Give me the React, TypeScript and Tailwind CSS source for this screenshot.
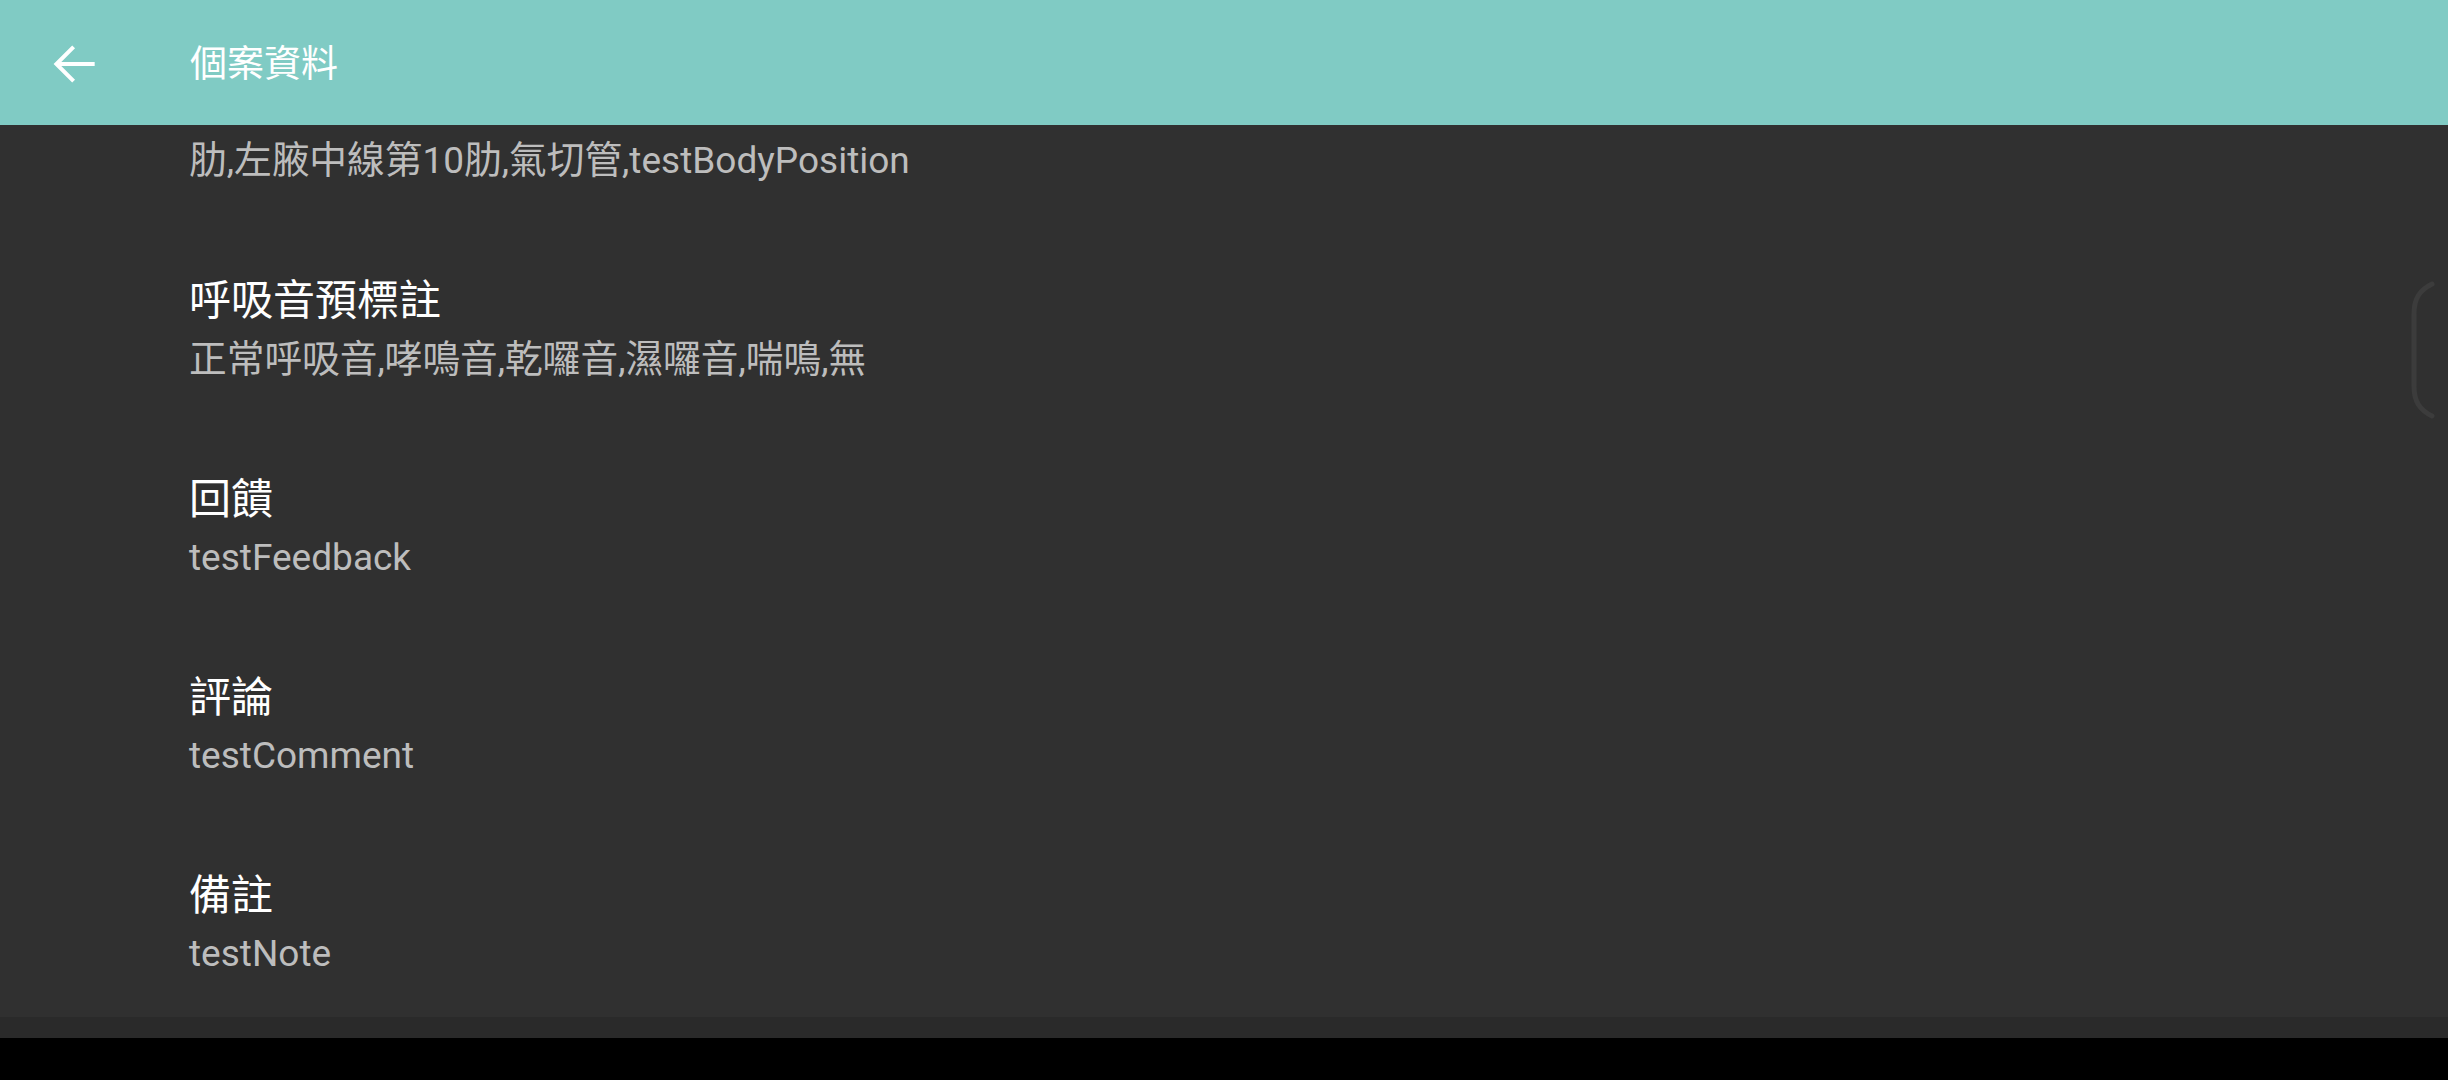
import React from "react";

const FONT = { fontFamily: 'Roboto, "Noto Sans CJK TC", "Noto Sans", sans-serif' };

function Mixed({ text }: { text: string }) {
  const parts = text.split(/([\u3400-\u9fff]+)/).filter((p) => p.length > 0);
  return (
    <>
      {parts.map((p, i) =>
        /[\u3400-\u9fff]/.test(p) ? (
          <span key={i} className="text-[37.7px]">
            {p}
          </span>
        ) : (
          <span key={i}>{p}</span>
        )
      )}
    </>
  );
}

function Item({ label, value }: { label: string; value: string }) {
  return (
    <div className="pt-[41px] pb-[41px] pl-[189px]">
      <div className="text-[42px] leading-[60px] text-white">{label}</div>
      <div className="text-[37px] leading-[56px] text-[#bdbdbd]">
        <Mixed text={value} />
      </div>
    </div>
  );
}

export default function App() {
  return (
    <div className="relative w-[2448px] h-[1080px] bg-black overflow-hidden" style={FONT}>
      <div className="h-[125px] bg-[#80cbc4] flex items-center">
        <div className="w-[62px] h-[62px] ml-[43px] mt-[3px] flex items-center justify-center">
          <svg width="62" height="62" viewBox="0 0 24 24" fill="#ffffff">
            <path d="M20 11.2H7.1l5.3-5.3L11.3 4.8 4.1 12l7.2 7.2 1.1-1.1-5.3-5.3H20z" />
          </svg>
        </div>
        <div className="ml-[85px] mt-[4px] text-[37px] leading-[48px] text-white">個案資料</div>
      </div>
      <div className="h-[892px] bg-[#303030] overflow-hidden">
        <div className="pt-[7px] pb-[41px] pl-[189px]">
          <div className="text-[37px] leading-[56px] text-[#bdbdbd]">
            <Mixed text="肋,左腋中線第10肋,氣切管,testBodyPosition" />
          </div>
        </div>
        <Item label="呼吸音預標註" value="正常呼吸音,哮鳴音,乾囉音,濕囉音,喘鳴,無" />
        <Item label="回饋" value="testFeedback" />
        <Item label="評論" value="testComment" />
        <Item label="備註" value="testNote" />
      </div>
      <div className="h-[21px] bg-[#2a2a2a]" />
      <svg
        className="absolute left-[2400px] top-[270px]"
        width="48"
        height="160"
        viewBox="2400 270 48 160"
      >
        <path
          d="M2432 284 C2420 290 2414 298 2414 314 L2414 386 C2414 402 2420 410 2432 416"
          fill="none"
          stroke="#3c3c3c"
          strokeWidth="5"
          strokeLinecap="round"
        />
      </svg>
    </div>
  );
}
